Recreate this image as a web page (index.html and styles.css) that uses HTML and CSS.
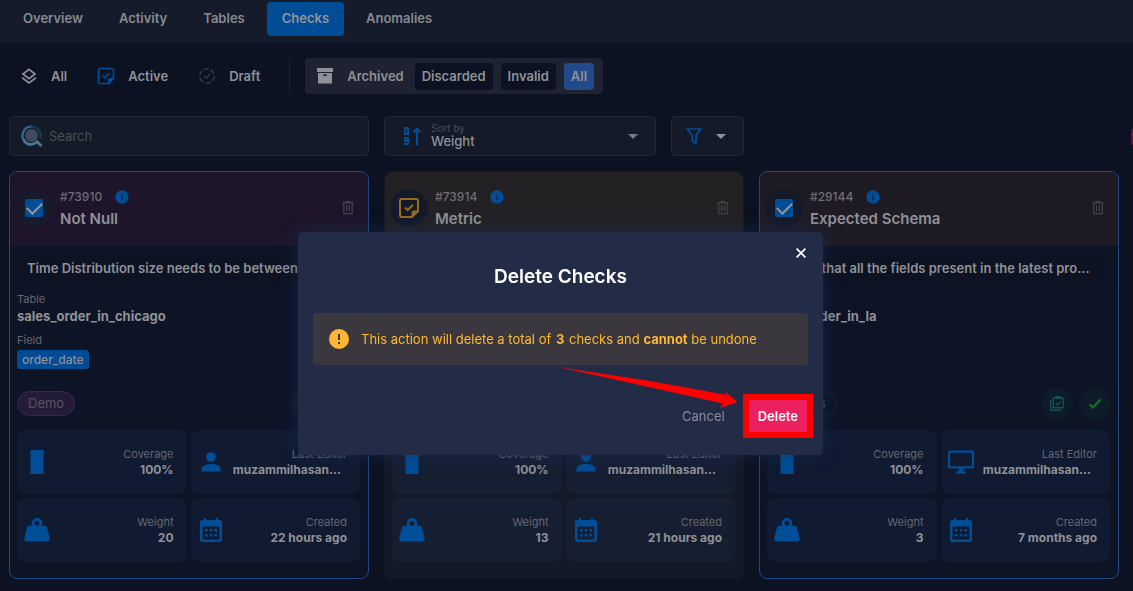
FILE: index.html
```html
<!DOCTYPE html>
<html lang="en">
<head>
<meta charset="utf-8">
<meta name="viewport" content="width=device-width, initial-scale=1">
<title>Checks</title>
<link rel="stylesheet" href="styles.css">
</head>
<body>
<svg class="sprite" aria-hidden="true">
  <symbol id="i-info" viewBox="0 0 24 24"><path d="M13 9h-2V7h2m0 10h-2v-6h2m-1-9A10 10 0 0 0 2 12a10 10 0 0 0 10 10 10 10 0 0 0 10-10A10 10 0 0 0 12 2Z"/></symbol>
  <symbol id="i-trash" viewBox="0 0 12 14"><path fill="none" stroke="currentColor" stroke-width="1.200" d="M.5 1.800h11M4 1.200V.6h4v.6M1.800 2v10.600h8.400V2M4.600 4.200v6M7.400 4.200v6"/></symbol>
  <symbol id="i-note" viewBox="0 0 24 24"><path fill-rule="evenodd" d="M5 2h14a3 3 0 0 1 3 3v10.500L15.500 22H5a3 3 0 0 1-3-3V5a3 3 0 0 1 3-3Zm0 2a1 1 0 0 0-1 1v14a1 1 0 0 0 1 1h9.500v-3.500a2 2 0 0 1 2-2H20V5a1 1 0 0 0-1-1Z"/><path fill="none" stroke="currentColor" stroke-width="2" d="m8 11.500 2.600 2.600L16 8.700"/></symbol>
  <symbol id="i-person" viewBox="0 0 20 20"><circle cx="10" cy="5" r="4.800"/><path d="M.5 19.500V17c0-3.200 4.500-5 9.500-5s9.500 1.800 9.500 5v2.500Z"/></symbol>
  <symbol id="i-weight" viewBox="0 0 24 22"><path fill-rule="evenodd" d="M12 0a4.700 4.700 0 0 1 4.200 7H19c1 0 1.900.7 2.200 1.700l2.500 9.600C24.100 20 23 21.500 21.500 21.500h-19C1 21.500-.1 20 .3 18.300l2.500-9.600C3.100 7.700 4 7 5 7h2.800A4.700 4.700 0 0 1 12 0Zm0 2.500a2.300 2.300 0 1 0 0 4.600 2.300 2.300 0 0 0 0-4.600Z"/></symbol>
  <symbol id="i-calendar" viewBox="0 0 22 24"><path fill-rule="evenodd" d="M4 0h2v2h10V0h2v2h1.500C21 2 22 3 22 4.500v17c0 1.500-1 2.500-2.500 2.500h-17C1 24 0 23 0 21.500v-17C0 3 1 2 2.500 2H4ZM2.500 8.500v13h17v-13Z"/><path d="M5 11h2.600v2.500H5zm4.700 0h2.600v2.500H9.700zm4.700 0H17v2.500h-2.600zM5 16h2.600v2.500H5zm4.700 0h2.600v2.500H9.700zm4.700 0H17v2.500h-2.600z"/></symbol>
  <symbol id="i-monitor" viewBox="0 0 26 23"><path fill-rule="evenodd" d="M2 0h22a2 2 0 0 1 2 2v14a2 2 0 0 1-2 2h-8.500v3H18v2H8v-2h2.500v-3H2a2 2 0 0 1-2-2V2a2 2 0 0 1 2-2Zm0 2.200v13.600h22V2.200Z"/></symbol>
  <symbol id="i-bar" viewBox="0 0 12 22"><path d="M0 0h12v22H0z"/></symbol>
  <symbol id="i-tasks" viewBox="0 0 16 16"><path fill="none" stroke="currentColor" stroke-width="1.400" d="M4.200 2.200h10v9.600h-10zM1.700 4v10.300h10.800M7 2V.8h4.400V2M6.700 7l1.900 1.900 3.300-3.500"/></symbol>
  <symbol id="i-tick" viewBox="0 0 14 12"><path fill="none" stroke="currentColor" stroke-width="2.600" d="m1.500 6.500 3.500 3L12.500 1.500"/></symbol>
</svg>

<nav class="tabs">
  <a class="tab" href="#overview">Overview</a>
  <a class="tab" href="#activity">Activity</a>
  <a class="tab" href="#tables">Tables</a>
  <a class="tab tab-active" href="#checks" aria-current="page">Checks</a>
  <a class="tab" href="#anomalies">Anomalies</a>
</nav>

<main class="page">
  <div class="filters">
    <button class="filter" type="button">
      <svg class="ico16" viewBox="0 0 16 16"><path fill="none" stroke="currentColor" stroke-width="1.800" d="M8 1.400 14 6 8 10.600 2 6Z"/><path fill="none" stroke="currentColor" stroke-width="1.800" d="m1 9.600 7 5.300 7-5.300"/></svg>
      All</button>
    <button class="filter" type="button"><svg class="ico20 blue"><use href="#i-note"/></svg>Active</button>
    <button class="filter" type="button">
      <svg class="ico16 faint" viewBox="0 0 16 16"><circle cx="8" cy="8" r="7.200" fill="none" stroke="currentColor" stroke-width="1.500" stroke-dasharray="5.500 2"/><path fill="none" stroke="currentColor" stroke-width="1.500" d="m5 8 2.200 2.200L11.200 6"/></svg>
      Draft</button>
    <div class="archived">
      <svg class="ico16 archive-ico" viewBox="0 0 16 16"><path fill-rule="evenodd" d="M0 0h16v4H0zM1 5h14v10.500H1zm5 1.500V8h4V6.500Z"/></svg>
      <span class="archived-label">Archived</span>
      <button class="chip" type="button">Discarded</button>
      <button class="chip" type="button">Invalid</button>
      <button class="chip chip-on" type="button">All</button>
    </div>
  </div>

  <div class="tools">
    <label class="field search">
      <svg class="search-ico" viewBox="0 0 22 22"><circle cx="10.500" cy="10.500" r="6.500" fill="#414b5e"/><path fill="none" stroke="#123c5a" stroke-width="2.600" d="M10.500 1.500a9 9 0 0 1 8.500 12"/><path fill="none" stroke="#2c6289" stroke-width="2.600" d="M5 17.600A9 9 0 0 1 10.500 1.500"/><path fill="none" stroke="#4c7795" stroke-width="2.800" d="M2.600 14.500c2.500 5.500 9 6.500 13.500 2.300l4.400 4.200"/></svg>
      <input type="text" placeholder="Search" aria-label="Search">
    </label>
    <div class="toolset">
      <button class="field sort" type="button">
        <svg class="sort-ico" viewBox="0 0 18 18"><path fill="none" stroke="currentColor" stroke-width="2" d="M2 1h3v6H2ZM6 14H2v-3h3v6H1M14 18V2M10.500 5.200 14 1.700l3.500 3.500"/></svg>
        <span class="sort-text"><span class="sort-label">Sort by</span><span class="sort-value">Weight</span></span>
        <svg class="caret" viewBox="0 0 10 5"><path d="M0 0h10L5 5Z"/></svg>
      </button>
      <button class="field funnel" type="button" aria-label="Filter">
        <svg class="funnel-ico" viewBox="0 0 16 17"><path fill="none" stroke="currentColor" stroke-width="1.700" d="M1.500 1h13L10 7.800v8L6.300 13V7.800Z"/></svg>
        <svg class="caret" viewBox="0 0 10 5"><path d="M0 0h10L5 5Z"/></svg>
      </button>
    </div>
  </div>

  <div class="cards">
    <article class="card selected">
      <header class="card-head plum">
        <span class="disc"><input class="tickbox" type="checkbox" checked aria-label="Select check 73910"></span>
        <div class="ident"><div class="num">#73910 <svg class="ico16 blue"><use href="#i-info"/></svg></div><h2>Not Null</h2></div>
        <button class="trash" type="button" aria-label="Delete check"><svg><use href="#i-trash"/></svg></button>
      </header>
      <div class="card-body">
        <p class="desc">Time Distribution size needs to be between</p>
        <div class="where"><span class="label">Table</span><b>sales_order_in_chicago</b><span class="label second">Field</span><span class="column">order_date</span></div>
        <div class="meta"><span class="tag purple">Demo</span><span class="state teal"><svg><use href="#i-tasks"/></svg></span><span class="state green"><svg><use href="#i-tick"/></svg></span></div>
        <div class="stats">
          <div class="stat"><svg><use href="#i-bar"/></svg><div><span class="label">Coverage</span><b>100%</b></div></div>
          <div class="stat"><svg class="small"><use href="#i-person"/></svg><div><span class="label">Last Editor</span><b class="who">muzammilhasan...</b></div></div>
          <div class="stat"><svg><use href="#i-weight"/></svg><div><span class="label">Weight</span><b>20</b></div></div>
          <div class="stat"><svg><use href="#i-calendar"/></svg><div><span class="label">Created</span><b>22 hours ago</b></div></div>
        </div>
      </div>
    </article>

    <article class="card">
      <header class="card-head brown">
        <span class="disc navy"><svg class="amber"><use href="#i-note"/></svg></span>
        <div class="ident"><div class="num">#73914 <svg class="ico16 blue"><use href="#i-info"/></svg></div><h2>Metric</h2></div>
        <button class="trash" type="button" aria-label="Delete check"><svg><use href="#i-trash"/></svg></button>
      </header>
      <div class="card-body">
        <p class="desc"></p>
        <div class="where"></div>
        <div class="meta"></div>
        <div class="stats">
          <div class="stat"><svg><use href="#i-bar"/></svg><div><span class="label">Coverage</span><b>100%</b></div></div>
          <div class="stat"><svg class="small"><use href="#i-person"/></svg><div><span class="label">Last Editor</span><b class="who">muzammilhasan...</b></div></div>
          <div class="stat"><svg><use href="#i-weight"/></svg><div><span class="label">Weight</span><b>13</b></div></div>
          <div class="stat"><svg><use href="#i-calendar"/></svg><div><span class="label">Created</span><b>21 hours ago</b></div></div>
        </div>
      </div>
    </article>

    <article class="card selected">
      <header class="card-head umber">
        <span class="disc navy"><input class="tickbox" type="checkbox" checked aria-label="Select check 29144"></span>
        <div class="ident"><div class="num">#29144 <svg class="ico16 blue"><use href="#i-info"/></svg></div><h2>Expected Schema</h2></div>
        <button class="trash" type="button" aria-label="Delete check"><svg><use href="#i-trash"/></svg></button>
      </header>
      <div class="card-body">
        <p class="desc">Assert that all the fields present in the latest pro...</p>
        <div class="where"><span class="label">Table</span><b>sales_order_in_la</b></div>
        <div class="meta"><span class="tag">Reports</span><span class="state teal"><svg><use href="#i-tasks"/></svg></span><span class="state green"><svg><use href="#i-tick"/></svg></span></div>
        <div class="stats">
          <div class="stat"><svg><use href="#i-bar"/></svg><div><span class="label">Coverage</span><b>100%</b></div></div>
          <div class="stat"><svg><use href="#i-monitor"/></svg><div><span class="label">Last Editor</span><b class="who">muzammilhasan...</b></div></div>
          <div class="stat"><svg><use href="#i-weight"/></svg><div><span class="label">Weight</span><b>3</b></div></div>
          <div class="stat"><svg><use href="#i-calendar"/></svg><div><span class="label">Created</span><b>7 months ago</b></div></div>
        </div>
      </div>
    </article>
  </div>
</main>

<span class="edge-dot"></span>

<div class="overlay">
  <section class="dialog" role="dialog" aria-modal="true" aria-labelledby="dlg-title">
    <button class="close" type="button" aria-label="Close"><svg viewBox="0 0 10 10"><path fill="none" stroke="currentColor" stroke-width="1.700" d="m.6.6 8.800 8.800M9.400.6.6 9.400"/></svg></button>
    <h1 id="dlg-title">Delete Checks</h1>
    <div class="warning">
      <svg viewBox="0 0 24 24"><path d="M13 13h-2V7h2m0 10h-2v-2h2M12 2A10 10 0 0 0 2 12a10 10 0 0 0 10 10 10 10 0 0 0 10-10A10 10 0 0 0 12 2"/></svg>
      <p>This action will delete a total of <b class="count">3</b> checks and <b>cannot</b> be undone</p>
    </div>
    <div class="actions">
      <button class="cancel" type="button">Cancel</button>
      <button class="delete" type="button">Delete</button>
    </div>
    <svg class="arrow" viewBox="0 0 184 44" aria-hidden="true"><path fill="#fe0000" d="M2 2 94 16l77 14-3.500-5L181.500 37 164 43l3-4.500L97 23Z"/></svg>
  </section>
</div>
</body>
</html>
```
FILE: styles.css
```css
* { box-sizing: border-box; }

body {
  margin: 0;
  background: #0c1221;
  color: #909196;
  font: 600 13px/16px Inter, "Open Sans", sans-serif;
}

button, input { font: inherit; color: inherit; }
button { border: 0; background: none; padding: 0; cursor: pointer; }
svg { display: block; fill: currentColor; flex: none; }
h1, h2, p { margin: 0; }
b { font-weight: 700; }

.sprite { display: none; }
.ico16 { width: 16px; height: 16px; }
.ico20 { width: 20px; height: 20px; margin: 0 -2px; }
.blue { color: #004e98; }
.faint { color: #333848; }

/* Top tabs */
.tabs {
  display: flex;
  gap: 8px;
  height: 43px;
  padding: 2px 9px 0;
  background: #151b2a;
}
.tab {
  height: 34px;
  padding: 0 14px;
  border-radius: 4px;
  color: #87898f;
  line-height: 33px;
  text-decoration: none;
}
.tab-active { padding: 0 15px; background: #004c95; color: #91959d; }

/* Page */
.page { padding: 15px 14px 12px 9px; }

.filters { display: flex; align-items: center; height: 36px; }
.filter { display: flex; align-items: center; gap: 14px; height: 34px; padding: 0 12px; margin-right: 7px; }
.archived {
  display: flex;
  align-items: center;
  height: 36px;
  margin-left: 26px;
  padding: 0 9px 0 12px;
  border-radius: 4px;
  background: #1f2230;
  position: relative;
}
.archived::before {
  content: "";
  position: absolute;
  left: -16px;
  width: 1px;
  height: 36px;
  background: #1e2433;
}
.archive-ico { margin-right: 14px; }
.archived-label { margin-right: 11px; }
.chip {
  height: 27px;
  margin-left: 8px;
  padding: 0 7px;
  border-radius: 4px;
  background: #0c1221;
}
.archived-label + .chip { margin-left: 0; }
.chip-on { background: #214a8b; }

.tools, .cards {
  display: grid;
  grid-template-columns: repeat(3, minmax(0, 1fr));
  gap: 15px;
}
.tools { margin: 22px 0 15px; }
.toolset { display: flex; gap: 15px; }
.field {
  display: flex;
  align-items: center;
  height: 40px;
  border: 1px solid #222836;
  border-radius: 4px;
  background: #141a28;
}
.search { padding: 0 11px; gap: 6px; }
.search-ico { width: 22px; height: 22px; }
.search input {
  flex: 1;
  min-width: 0;
  padding: 0;
  border: 0;
  outline: 0;
  background: none;
  font-size: 13px;
  font-weight: 400;
}
.search input::placeholder { color: #4a4e55; opacity: 1; }
.sort { flex: 1; padding: 0 17px 0 18px; gap: 10px; text-align: left; }
.sort-ico { width: 18px; height: 18px; color: #004e98; }
.sort-text { display: flex; flex: 1; flex-direction: column; }
.sort-label { color: #484c56; font-size: 10px; font-weight: 400; line-height: 11px; }
.sort-value { font-size: 13px; font-weight: 500; line-height: 15px; }
.caret { width: 10px; height: 5px; }
.sort .caret { color: #777a81; }
.funnel { width: 73px; justify-content: flex-start; gap: 14px; padding-left: 14px; }
.funnel-ico { width: 16px; height: 17px; color: #004e98; }

/* Cards */
.card {
  border: 1px solid #141927;
  border-radius: 8px;
  background: #141927;
  overflow: hidden;
}
.card.selected { border-color: #214785; background: #0d1426; }
.card-head {
  display: flex;
  align-items: center;
  height: 74px;
  padding: 0 14px 2px 5px;
}
.plum { background: #1e152a; }
.brown { background: #232124; }
.umber { background: #1f1b25; }
.disc {
  display: grid;
  place-items: center;
  width: 38px;
  height: 38px;
  margin-right: 7px;
  border-radius: 50%;
  background: #171a2a;
}
.navy { background: #151a2a; }
.amber { width: 24px; height: 24px; color: #976d1c; }
.tickbox {
  appearance: none;
  display: grid;
  place-items: center;
  width: 18px;
  height: 18px;
  margin: 0;
  border-radius: 2px;
  background: #004e98;
}
.tickbox::before {
  content: "";
  width: 13px;
  height: 7px;
  border: solid #9296a0;
  border-width: 0 0 2px 2px;
  transform: translateY(-2px) rotate(-45deg);
}
.ident { flex: 1; padding-top: 3px; }
.num { display: flex; align-items: center; gap: 12px; height: 18px; color: #6f6d75; font-size: 12px; font-weight: 500; }
.ident h2 { margin-top: 1px; font-size: 15px; font-weight: 600; line-height: 24px; }
.trash svg { width: 12px; height: 14px; color: #454348; }

.card-body { padding: 8px 8px 16px 7px; }
.desc {
  height: 31px;
  padding: 0 10px;
  border-radius: 4px;
  background: #0d1322;
  line-height: 29px;
  white-space: nowrap;
  overflow: hidden;
}
.label { display: block; color: #65676f; font-size: 11px; font-weight: 400; }
.where { height: 97px; padding-top: 6px; }
.where b { display: block; line-height: 18px; }
.second { margin-top: 7px; }
.column {
  display: inline-block;
  margin-top: 2px;
  padding: 0 5px;
  border-radius: 3px;
  background: #004b93;
  font-size: 12px;
  font-weight: 500;
  line-height: 19px;
}
.meta { display: flex; align-items: center; gap: 7px; height: 31px; margin: 6px 0 11px; }
.tag {
  margin-right: auto;
  padding: 0 10px;
  border: 1px solid #1e2433;
  border-radius: 13px;
  color: #50545f;
  font-size: 13px;
  font-weight: 400;
  line-height: 23px;
}
.purple { border-color: #352a4b; background: #231b38; color: #5e5168; }
.state { display: grid; place-items: center; width: 31px; height: 31px; border-radius: 50%; background: #0e1b28; }
.teal { color: #165052; }
.teal svg { width: 16px; height: 16px; }
.green { color: #146529; }
.green svg { width: 14px; height: 12px; }

.stats { display: grid; grid-template-columns: 1fr 1fr; gap: 4px; }
.stat {
  display: flex;
  align-items: center;
  justify-content: space-between;
  height: 64px;
  padding: 0 13px 1px 7px;
  border-radius: 8px;
  background: #101a31;
  font-size: 12px;
  text-align: right;
  white-space: nowrap;
}
.card:not(.selected) .desc { background: #141927; }
.card:not(.selected) .stat { background: #161e32; }
.stat svg { width: 26px; height: 24px; color: #004e98; }
.stat .small { height: 20px; }
.who { padding-right: 6px; }

.edge-dot {
  position: absolute;
  top: 129px;
  right: 0;
  width: 2px;
  height: 16px;
  border-radius: 8px 0 0 8px;
  background: #5b1545;
}

/* Dialog */
.overlay {
  position: fixed;
  inset: 0 12px 0 0;
  display: flex;
  justify-content: center;
  align-items: flex-start;
  padding-top: 232px;
}
.dialog {
  position: relative;
  width: 525px;
  padding: 31px 15px 17px;
  border-radius: 5px;
  background: #232c47;
  box-shadow: 0 0 18px #1a315e88;
}
.close { position: absolute; top: 16px; right: 17px; color: #fff; }
.close svg { width: 10px; height: 10px; }
.dialog h1 { color: #fff; font-size: 19px; font-weight: 600; line-height: 28px; text-align: center; }
.warning {
  display: flex;
  align-items: center;
  gap: 10px;
  height: 52px;
  margin: 22px 0 29px;
  padding: 0 14px;
  border-radius: 4px;
  background: #3a383e;
  color: #ffb731;
}
.warning svg { width: 24px; height: 24px; }
.warning p { font-weight: 400; white-space: nowrap; }
.count { margin: 0 1px; }
.actions { display: flex; justify-content: flex-end; align-items: center; gap: 18px; margin-right: -5px; }
.cancel { color: #8c8f99; font-weight: 400; }
.delete {
  height: 44px;
  padding: 0 9px 1px;
  border: 6px solid #fe0000;
  background: #ec1f61;
  color: #fff;
}
.arrow { position: absolute; top: 133px; left: 258px; width: 184px; height: 44px; }
```
